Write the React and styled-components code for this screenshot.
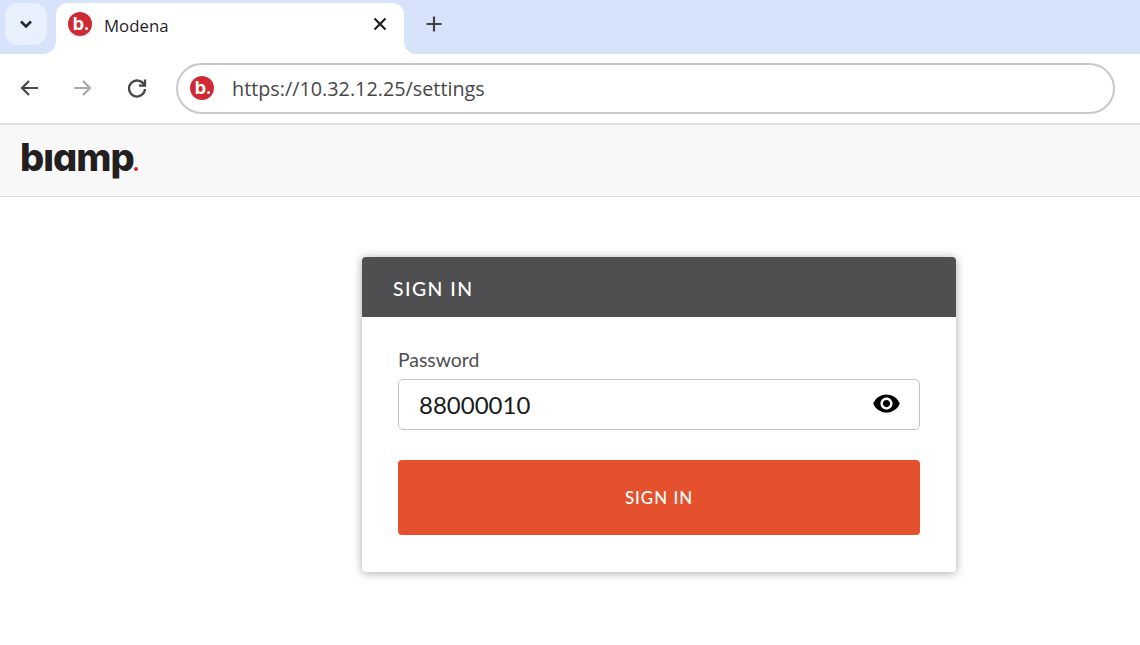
import React from "react";
import styled, { createGlobalStyle } from "styled-components";

const Global = createGlobalStyle`
  html, body { margin: 0; padding: 0; background: #fff; overflow: hidden; }
  * { box-sizing: border-box; }
`;
const Page = styled.div`
  width: 1140px; height: 645px; display: flex; flex-direction: column; overflow: hidden; background: #fff;
`;
const TabStrip = styled.div`
  height: 54px; flex: none; background: #d7e3fb; display: flex; align-items: flex-start; padding: 3px 0 0 5px;
`;
const TabSearch = styled.div`
  width: 42px; height: 42px; border-radius: 13px; background: #e9f0fd; display: flex; align-items: center; justify-content: center; margin-right: 9px;
`;
const Tab = styled.div`
  position: relative; width: 348px; height: 51px; background: #fff; border-radius: 12px 12px 0 0;
  display: flex; align-items: center; padding: 0 12px 9px 12px;
  &::before, &::after { content: ""; position: absolute; bottom: 0; width: 12px; height: 12px; }
  &::before { left: -12px; background: radial-gradient(circle at 0 0, transparent 11.5px, #fff 12px); }
  &::after { right: -12px; background: radial-gradient(circle at 100% 0, transparent 11.5px, #fff 12px); }
`;
const TabTitle = styled.span`
  font: 400 16.8px "Open Sans", sans-serif; color: #1f1f1f; margin-left: 12px; flex: 1; position: relative; top: 1px;
`;
const NewTab = styled.div`
  width: 24px; height: 24px; margin: 9px 0 0 18px; display: flex; align-items: center; justify-content: center;
`;
const Toolbar = styled.div`
  height: 69px; flex: none; background: #fff; display: flex; align-items: center; padding: 0 25px 1px 17px;
  margin-top: 0; position: relative;
`;
const NavButton = styled.div`
  width: 24px; height: 24px; margin-right: 30px; display: flex; align-items: center; justify-content: center;
  &:nth-of-type(3) { margin-right: 27px; }
`;
const UrlBar = styled.div`
  flex: 1; height: 51px; border: 2px solid #c8c8c8; border-radius: 26px; display: flex; align-items: center; padding: 0 0 0 12px;
`;
const UrlText = styled.span`
  font: 400 19.8px "Open Sans", sans-serif; color: #474747; margin-left: 18px;
`;
const Favicon = styled.span`
  position: relative; width: 24px; height: 24px; flex: none; border-radius: 50%; background: #cf2a34; color: #fff;
  display: flex; align-items: center; justify-content: center;
  font: 700 18px/24px "Inter", sans-serif; padding: 0 3px 1px 0;
  &::after { content: ""; position: absolute; right: 4px; top: 15px; width: 3px; height: 3px; border-radius: 50%; background: #fff; }
`;
const AppHeader = styled.header`
  height: 74px; flex: none; background: #f8f8f8; border-top: 2px solid #e0e0e0; border-bottom: 1px solid #dedede; display: flex; align-items: flex-start; padding: 10px 0 0 20px;
`;
const Logo = styled.div`
  position: relative; font: 800 38px/44px "Inter", sans-serif; font-feature-settings: "cv11" 1; color: #231f20; letter-spacing: -1px;
  &::after { content: ""; position: absolute; left: 114px; top: 32px; width: 4px; height: 4px; border-radius: 50%; background: #cf2a34; }
`;
const Main = styled.main`
  flex: 1; padding: 60px 0 0 362px;
`;
const Card = styled.section`
  width: 594px; height: 315px; background: #fff; border-radius: 4px; box-shadow: 0 1px 10px rgba(0,0,0,.35); overflow: hidden;
`;
const CardHeader = styled.div`
  height: 60px; background: #4f4e50; color: #fff; display: flex; align-items: center; padding: 3px 31px 0;
  font: 500 19.4px "Lato", sans-serif; letter-spacing: 1.45px;
`;
const CardBody = styled.form`
  padding: 32px 36px 0;
  display: flex; flex-direction: column;
`;
const Label = styled.label`
  font: 400 19.4px/22px "Lato", sans-serif; color: #4f4e50; margin-bottom: 8px;
`;
const InputWrap = styled.div`
  height: 51px; border: 1px solid #c4c4c4; border-radius: 5px; display: flex; align-items: center; justify-content: space-between; padding: 0 18px 0 20px;
`;
const Value = styled.span`
  font: 400 24px "Lato", sans-serif; color: #1a1a1a; letter-spacing: 0;
`;
const EyeIcon = styled.svg`
  margin: 0 0 2px 0;
`;
const SubmitButton = styled.button`
  margin-top: 30px; height: 75px; border: 0; border-radius: 4px; background: #e5512d; color: #fff;
  font: 500 16.9px "Lato", sans-serif; letter-spacing: 1px; padding: 0;
`;

const Stroke = ({ d, color, size = 24, w = 2 }) => (
  <svg width={size} height={size} viewBox="0 0 24 24" fill="none" stroke={color} strokeWidth={w}>
    <path d={d} />
  </svg>
);

export default function App() {
  return (
    <Page>
      <Global />
      <TabStrip>
        <TabSearch>
          <Stroke d="M7 9.5l5 5 5-5" color="#1f2937" w={2.6} />
        </TabSearch>
        <Tab>
          <Favicon>b</Favicon>
          <TabTitle>Modena</TabTitle>
          <Stroke d="M6.5 6.5l11 11M17.5 6.5l-11 11" color="#1f1f1f" w={2.2} />
        </Tab>
        <NewTab>
          <Stroke d="M12 4.5v15M4.5 12h15" color="#444" w={2.2} />
        </NewTab>
      </TabStrip>
      <Toolbar>
        <NavButton>
          <Stroke d="M21 12H5M12 5l-7 7 7 7" color="#474747" w={2.2} />
        </NavButton>
        <NavButton>
          <Stroke d="M3 12h16M12 5l7 7-7 7" color="#a8a8a8" w={2.2} />
        </NavButton>
        <NavButton>
          <svg width="24" height="24" viewBox="0 0 24 24" fill="none" stroke="#474747" strokeWidth="2.3">
            <path d="M19.2 9A8 8 0 1 0 20 13" />
            <path d="M20 3.5V9.6h-6.1" fill="none" />
          </svg>
        </NavButton>
        <UrlBar>
          <Favicon>b</Favicon>
          <UrlText>https://10.32.12.25/settings</UrlText>
        </UrlBar>
      </Toolbar>
      <AppHeader>
        <Logo>bıamp</Logo>
      </AppHeader>
      <Main>
        <Card>
          <CardHeader>SIGN IN</CardHeader>
          <CardBody>
            <Label>Password</Label>
            <InputWrap>
              <Value>88000010</Value>
              <EyeIcon width="29" height="29" viewBox="0 0 24 24" fill="#000">
                <path d="M12 4.5C7 4.5 2.73 7.61 1 12c1.73 4.39 6 7.5 11 7.5s9.27-3.11 11-7.5c-1.73-4.39-6-7.5-11-7.5zM12 17c-2.76 0-5-2.24-5-5s2.24-5 5-5 5 2.24 5 5-2.24 5-5 5zm0-8c-1.66 0-3 1.34-3 3s1.34 3 3 3 3-1.34 3-3-1.34-3-3-3z" />
              </EyeIcon>
            </InputWrap>
            <SubmitButton type="button">SIGN IN</SubmitButton>
          </CardBody>
        </Card>
      </Main>
    </Page>
  );
}
